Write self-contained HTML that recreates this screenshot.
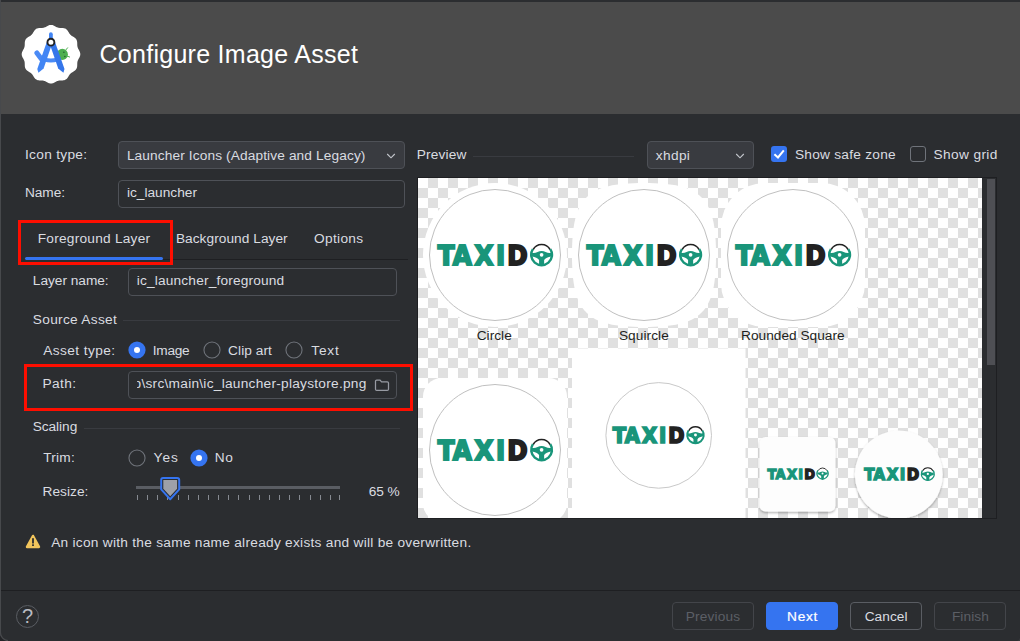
<!DOCTYPE html>
<html lang="en"><head><meta charset="utf-8"><title>Configure Image Asset</title>
<style>
*{box-sizing:border-box;margin:0;padding:0}
html,body{width:1020px;height:641px;overflow:hidden;background:#2b2d30}
body{position:relative;font-family:"Liberation Sans", sans-serif;font-size:13px;color:#dadce0}
.t{position:absolute;white-space:nowrap;line-height:1;display:block}
.abs{position:absolute}
.field{position:absolute;border:1px solid #4e5157;border-radius:4px;background:#2b2d30}
.combo{background:#393b40}
.hline{position:absolute;height:1px;background:#393b40}
.dline{position:absolute;height:1px;background:#1e1f22}
.red{position:absolute;border:3px solid #fe0e00}
.tick{position:absolute;top:495px;width:1px;height:5px;background:#868a91}
.btn{position:absolute;top:602px;height:28px;border-radius:4px;border:1px solid #4e5157}
</style></head><body>
<div class="abs" style="left:0;top:2px;width:1020px;height:112px;background:#4b4b4b"></div>
<div class="abs" style="left:0;top:0;width:1px;height:641px;background:#47494c"></div>
<svg class="abs" style="left:0;top:0" width="100" height="114" viewBox="0 0 100 114">
<path d="M80.30,54.20 L80.28,54.71 L80.20,55.22 L80.09,55.72 L79.93,56.22 L79.74,56.71 L79.52,57.20 L79.28,57.67 L79.03,58.14 L78.78,58.60 L78.53,59.05 L78.29,59.50 L78.07,59.95 L77.87,60.40 L77.70,60.86 L77.56,61.32 L77.45,61.79 L77.37,62.26 L77.32,62.75 L77.28,63.25 L77.26,63.76 L77.25,64.28 L77.24,64.80 L77.23,65.33 L77.20,65.86 L77.15,66.39 L77.07,66.91 L76.95,67.42 L76.80,67.92 L76.61,68.40 L76.37,68.85 L76.10,69.28 L75.78,69.69 L75.43,70.06 L75.04,70.42 L74.63,70.75 L74.20,71.06 L73.76,71.35 L73.31,71.63 L72.85,71.90 L72.41,72.17 L71.98,72.44 L71.56,72.72 L71.17,73.01 L70.80,73.32 L70.45,73.65 L70.12,74.00 L69.81,74.37 L69.52,74.76 L69.24,75.18 L68.97,75.61 L68.70,76.05 L68.43,76.51 L68.15,76.96 L67.86,77.40 L67.55,77.83 L67.22,78.24 L66.86,78.63 L66.49,78.98 L66.08,79.30 L65.65,79.57 L65.20,79.81 L64.72,80.00 L64.22,80.15 L63.71,80.27 L63.19,80.35 L62.66,80.40 L62.13,80.43 L61.60,80.44 L61.08,80.45 L60.56,80.46 L60.05,80.48 L59.55,80.52 L59.06,80.57 L58.59,80.65 L58.12,80.76 L57.66,80.90 L57.20,81.07 L56.75,81.27 L56.30,81.49 L55.85,81.73 L55.40,81.98 L54.94,82.23 L54.47,82.48 L54.00,82.72 L53.51,82.94 L53.02,83.13 L52.52,83.29 L52.02,83.40 L51.51,83.48 L51.00,83.50 L50.49,83.48 L49.98,83.40 L49.48,83.29 L48.98,83.13 L48.49,82.94 L48.00,82.72 L47.53,82.48 L47.06,82.23 L46.60,81.98 L46.15,81.73 L45.70,81.49 L45.25,81.27 L44.80,81.07 L44.34,80.90 L43.88,80.76 L43.41,80.65 L42.94,80.57 L42.45,80.52 L41.95,80.48 L41.44,80.46 L40.92,80.45 L40.40,80.44 L39.87,80.43 L39.34,80.40 L38.81,80.35 L38.29,80.27 L37.78,80.15 L37.28,80.00 L36.80,79.81 L36.35,79.57 L35.92,79.30 L35.51,78.98 L35.14,78.63 L34.78,78.24 L34.45,77.83 L34.14,77.40 L33.85,76.96 L33.57,76.51 L33.30,76.05 L33.03,75.61 L32.76,75.18 L32.48,74.76 L32.19,74.37 L31.88,74.00 L31.55,73.65 L31.20,73.32 L30.83,73.01 L30.44,72.72 L30.02,72.44 L29.59,72.17 L29.15,71.90 L28.69,71.63 L28.24,71.35 L27.80,71.06 L27.37,70.75 L26.96,70.42 L26.57,70.06 L26.22,69.69 L25.90,69.28 L25.63,68.85 L25.39,68.40 L25.20,67.92 L25.05,67.42 L24.93,66.91 L24.85,66.39 L24.80,65.86 L24.77,65.33 L24.76,64.80 L24.75,64.28 L24.74,63.76 L24.72,63.25 L24.68,62.75 L24.63,62.26 L24.55,61.79 L24.44,61.32 L24.30,60.86 L24.13,60.40 L23.93,59.95 L23.71,59.50 L23.47,59.05 L23.22,58.60 L22.97,58.14 L22.72,57.67 L22.48,57.20 L22.26,56.71 L22.07,56.22 L21.91,55.72 L21.80,55.22 L21.72,54.71 L21.70,54.20 L21.72,53.69 L21.80,53.18 L21.91,52.68 L22.07,52.18 L22.26,51.69 L22.48,51.20 L22.72,50.73 L22.97,50.26 L23.22,49.80 L23.47,49.35 L23.71,48.90 L23.93,48.45 L24.13,48.00 L24.30,47.54 L24.44,47.08 L24.55,46.61 L24.63,46.14 L24.68,45.65 L24.72,45.15 L24.74,44.64 L24.75,44.12 L24.76,43.60 L24.77,43.07 L24.80,42.54 L24.85,42.01 L24.93,41.49 L25.05,40.98 L25.20,40.48 L25.39,40.00 L25.63,39.55 L25.90,39.12 L26.22,38.71 L26.57,38.34 L26.96,37.98 L27.37,37.65 L27.80,37.34 L28.24,37.05 L28.69,36.77 L29.15,36.50 L29.59,36.23 L30.02,35.96 L30.44,35.68 L30.83,35.39 L31.20,35.08 L31.55,34.75 L31.88,34.40 L32.19,34.03 L32.48,33.64 L32.76,33.22 L33.03,32.79 L33.30,32.35 L33.57,31.89 L33.85,31.44 L34.14,31.00 L34.45,30.57 L34.78,30.16 L35.14,29.77 L35.51,29.42 L35.92,29.10 L36.35,28.83 L36.80,28.59 L37.28,28.40 L37.78,28.25 L38.29,28.13 L38.81,28.05 L39.34,28.00 L39.87,27.97 L40.40,27.96 L40.92,27.95 L41.44,27.94 L41.95,27.92 L42.45,27.88 L42.94,27.83 L43.41,27.75 L43.88,27.64 L44.34,27.50 L44.80,27.33 L45.25,27.13 L45.70,26.91 L46.15,26.67 L46.60,26.42 L47.06,26.17 L47.53,25.92 L48.00,25.68 L48.49,25.46 L48.98,25.27 L49.48,25.11 L49.98,25.00 L50.49,24.92 L51.00,24.90 L51.51,24.92 L52.02,25.00 L52.52,25.11 L53.02,25.27 L53.51,25.46 L54.00,25.68 L54.47,25.92 L54.94,26.17 L55.40,26.42 L55.85,26.67 L56.30,26.91 L56.75,27.13 L57.20,27.33 L57.66,27.50 L58.12,27.64 L58.59,27.75 L59.06,27.83 L59.55,27.88 L60.05,27.92 L60.56,27.94 L61.08,27.95 L61.60,27.96 L62.13,27.97 L62.66,28.00 L63.19,28.05 L63.71,28.13 L64.22,28.25 L64.72,28.40 L65.20,28.59 L65.65,28.83 L66.08,29.10 L66.49,29.42 L66.86,29.77 L67.22,30.16 L67.55,30.57 L67.86,31.00 L68.15,31.44 L68.43,31.89 L68.70,32.35 L68.97,32.79 L69.24,33.22 L69.52,33.64 L69.81,34.03 L70.12,34.40 L70.45,34.75 L70.80,35.08 L71.17,35.39 L71.56,35.68 L71.98,35.96 L72.41,36.23 L72.85,36.50 L73.31,36.77 L73.76,37.05 L74.20,37.34 L74.63,37.65 L75.04,37.98 L75.43,38.34 L75.78,38.71 L76.10,39.12 L76.37,39.55 L76.61,40.00 L76.80,40.48 L76.95,40.98 L77.07,41.49 L77.15,42.01 L77.20,42.54 L77.23,43.07 L77.24,43.60 L77.25,44.12 L77.26,44.64 L77.28,45.15 L77.32,45.65 L77.37,46.14 L77.45,46.61 L77.56,47.08 L77.70,47.54 L77.87,48.00 L78.07,48.45 L78.29,48.90 L78.53,49.35 L78.78,49.80 L79.03,50.26 L79.28,50.73 L79.52,51.20 L79.74,51.69 L79.93,52.18 L80.09,52.68 L80.20,53.18 L80.28,53.69Z" fill="#fff"/>
<rect x="49" y="32.3" width="3.8" height="9" rx="1.9" fill="#4285f4"/>
<path d="M36.9,53 L41.6,59.2" stroke="#4a8af5" stroke-width="5" stroke-linecap="round" fill="none"/>
<circle cx="62.3" cy="54.4" r="5.6" fill="#4caf50"/>
<path d="M65.6,50.2 L67.6,47.8 M67.4,56.2 L69.6,57" stroke="#4caf50" stroke-width="1" stroke-linecap="round"/>
<circle cx="63.9" cy="52.3" r="0.75" fill="#1e5c2a"/><circle cx="64.9" cy="56.6" r="0.75" fill="#1e5c2a"/>
<path d="M44.3,59.4 Q50.9,61.6 57.5,59.4" stroke="#4a8af5" stroke-width="3.9" fill="none"/>
<path d="M46.6,42.5 L50.9,42.5 L50.9,47.2 L43.6,68.6 L38.4,72.7 L37.3,69 Z" fill="#4285f4"/>
<path d="M55.2,42.5 L50.9,42.5 L50.9,47.2 L58.2,68.6 L63.4,72.7 L64.5,69 Z" fill="#3576ea"/>
<circle cx="50.9" cy="42.2" r="3.45" fill="#fff" stroke="#202124" stroke-width="1.9"/>
</svg>

<div class="field combo" style="left:118px;top:141px;width:287px;height:28px"></div>
<svg class="abs" style="left:386px;top:152px" width="10" height="8" viewBox="0 0 10 8"><path d="M1.2,2 L5,5.8 L8.8,2" fill="none" stroke="#c3c6cc" stroke-width="1.15"/></svg>
<div class="field" style="left:118px;top:180px;width:287px;height:28px"></div>

<div class="dline" style="left:25px;top:259px;width:383px"></div>
<div class="abs" style="left:25px;top:257px;width:138px;height:3px;border-radius:1.5px;background:#3574f0"></div>
<div class="red" style="left:18px;top:220px;width:155px;height:45px"></div>

<div class="field" style="left:128px;top:268px;width:269px;height:28px"></div>
<div class="hline" style="left:123px;top:320px;width:277px"></div>

<svg class="abs" style="left:127px;top:340px" width="20" height="20" viewBox="0 0 20 20"><circle cx="10" cy="10" r="8.6" fill="#3574f0"/><circle cx="10" cy="10" r="3" fill="#fff"/></svg>
<svg class="abs" style="left:202px;top:340px" width="20" height="20" viewBox="0 0 20 20"><circle cx="10" cy="10" r="8.05" fill="none" stroke="#6f737a" stroke-width="1.1"/></svg>
<svg class="abs" style="left:284px;top:340px" width="20" height="20" viewBox="0 0 20 20"><circle cx="10" cy="10" r="8.05" fill="none" stroke="#6f737a" stroke-width="1.1"/></svg>
<svg class="abs" style="left:127px;top:448px" width="20" height="20" viewBox="0 0 20 20"><circle cx="10" cy="10" r="8.05" fill="none" stroke="#6f737a" stroke-width="1.1"/></svg>
<svg class="abs" style="left:189px;top:448px" width="20" height="20" viewBox="0 0 20 20"><circle cx="10" cy="10" r="8.6" fill="#3574f0"/><circle cx="10" cy="10" r="3" fill="#fff"/></svg>
<div class="red" style="left:24px;top:364px;width:389px;height:47px"></div>
<div class="field" style="left:128px;top:371px;width:269px;height:28px"></div>
<div class="abs" id="pathclip" style="left:137px;top:376.65px;width:229.6px;height:17px;font-size:13.7px;overflow:hidden;display:flex;justify-content:flex-end;white-space:nowrap;line-height:1;letter-spacing:0.259px"><span id="pathv">app\src\main\ic_launcher-playstore.png</span></div>
<svg class="abs" style="left:374px;top:378px" width="16" height="14" viewBox="0 0 16 14"><path d="M1.5,3.2 Q1.5,2 2.7,2 L6,2 L7.6,3.8 L13.3,3.8 Q14.5,3.8 14.5,5 L14.5,11.2 Q14.5,12.4 13.3,12.4 L2.7,12.4 Q1.5,12.4 1.5,11.2 Z" fill="none" stroke="#989ba3" stroke-width="1.25"/></svg>

<div class="hline" style="left:84px;top:428px;width:316px"></div>

<div class="abs" style="left:136px;top:486px;width:204px;height:3px;background:#5a5d63"></div>
<div class="tick" style="left:137px"></div>
<div class="tick" style="left:147px"></div>
<div class="tick" style="left:157px"></div>
<div class="tick" style="left:167px"></div>
<div class="tick" style="left:178px"></div>
<div class="tick" style="left:188px"></div>
<div class="tick" style="left:198px"></div>
<div class="tick" style="left:208px"></div>
<div class="tick" style="left:218px"></div>
<div class="tick" style="left:228px"></div>
<div class="tick" style="left:238px"></div>
<div class="tick" style="left:249px"></div>
<div class="tick" style="left:259px"></div>
<div class="tick" style="left:269px"></div>
<div class="tick" style="left:279px"></div>
<div class="tick" style="left:289px"></div>
<div class="tick" style="left:299px"></div>
<div class="tick" style="left:310px"></div>
<div class="tick" style="left:320px"></div>
<div class="tick" style="left:330px"></div>
<div class="tick" style="left:339px"></div>
<svg class="abs" style="left:158px;top:474px" width="24" height="28" viewBox="0 0 24 28"><path d="M5,4 L19.2,4 Q21.2,4 21.2,6 L21.2,15.4 L12.2,25.2 L3.2,15.4 L3.2,6 Q3.2,4 5,4 Z" fill="#2b2d30" stroke="#3574f0" stroke-width="2" stroke-linejoin="round"/><path d="M5.3,6.1 L19.1,6.1 L19.1,14.7 L12.2,22.2 L5.3,14.7 Z" fill="#9da0a8"/></svg>

<svg class="abs" style="left:24px;top:533px" width="18" height="17" viewBox="0 0 18 17"><path d="M9,3 L14.9,13.9 L3.1,13.9 Z" fill="#f2c55c" stroke="#f2c55c" stroke-width="2.6" stroke-linejoin="round"/><rect x="8.1" y="5.2" width="1.8" height="5.3" fill="#2b2d30"/><rect x="8.1" y="11.3" width="1.8" height="1.7" fill="#2b2d30"/></svg>

<div class="hline" style="left:473px;top:156px;width:161px"></div>
<div class="field combo" style="left:647px;top:141px;width:107px;height:28px"></div>
<svg class="abs" style="left:735px;top:152px" width="10" height="8" viewBox="0 0 10 8"><path d="M1.2,2 L5,5.8 L8.8,2" fill="none" stroke="#c3c6cc" stroke-width="1.15"/></svg>
<div class="abs" style="left:771px;top:146px;width:16px;height:16px;border-radius:3px;background:#3574f0"></div>
<svg class="abs" style="left:771px;top:146px" width="16" height="16" viewBox="0 0 16 16"><path d="M3.4,8.2 L7,11.5 L12.8,4.4" fill="none" stroke="#fff" stroke-width="2"/></svg>
<div class="abs" style="left:910px;top:146px;width:16px;height:16px;border-radius:3px;border:1px solid #6f737a"></div>

<div class="abs" style="left:417px;top:177px;width:580px;height:342px;background:#1e1f22"></div>
<div class="abs" style="left:982px;top:178px;width:14px;height:340px;background:#2b2d30"></div>
<div class="abs" style="left:987px;top:179px;width:8px;height:186px;background:#4e4f54"></div>
<svg id="pv" width="564" height="340" viewBox="0 0 564 340" style="position:absolute;left:418px;top:178px">
<defs>
<pattern id="chk" width="20" height="20" patternUnits="userSpaceOnUse"><rect width="20" height="20" fill="#fff"/><rect x="10" width="10" height="10" fill="#e0e0e0"/><rect y="10" width="10" height="10" fill="#e0e0e0"/></pattern>
<filter id="sh" x="-20%" y="-20%" width="140%" height="140%"><feDropShadow dx="0" dy="1.4" stdDeviation="1.3" flood-color="#000" flood-opacity="0.32"/></filter>
</defs>
<rect width="564" height="340" fill="url(#chk)"/>
<circle cx="77" cy="77" r="72" fill="#fff"/>
<circle cx="77" cy="77" r="65.5" fill="none" stroke="#c0c0c0" stroke-width="1"/>
<g transform="translate(19.00,87.60) scale(1)">
<text transform="scale(0.92,1)" x="0.88 17.21 40.74 64.08 76.47" y="-1.00" font-family='"DejaVu Sans", "Liberation Sans", sans-serif' font-weight="700" font-size="26.7" stroke-width="2.00" stroke-linejoin="miter" stroke-miterlimit="2.5" fill="#19957a" stroke="#19957a">TAXI<tspan fill="#222" stroke="#222">D</tspan></text>
<g transform="translate(93.10,-22.30) scale(0.2300)">
<path d="M13,27.5 A41.9,41.9 0 0 1 87,27.5" fill="none" stroke="#222" stroke-width="7.4" stroke-linecap="butt"/>
<path d="M12.1,25.4 A45.2,45.2 0 1 0 87.9,25.4" fill="none" stroke="#19957a" stroke-width="10.5"/>
<path d="M8,41 C25,45 35,33 50,33 C65,33 75,45 92,41 L92,57 C78,59 66,64 61,73 L61,96 L39,96 L39,73 C34,64 22,59 8,57 Z" fill="#19957a"/>
<circle cx="50" cy="50" r="8" fill="#fff"/>
</g>
</g>
<path transform="translate(154,5)" d="M72,0 C14.4,0 0,14.4 0,72 C0,129.6 14.4,144 72,144 C129.6,144 144,129.6 144,72 C144,14.4 129.6,0 72,0 Z" fill="#fff"/>
<circle cx="226" cy="77" r="65.5" fill="none" stroke="#c0c0c0" stroke-width="1"/>
<g transform="translate(168.00,87.60) scale(1)">
<text transform="scale(0.92,1)" x="0.88 17.21 40.74 64.08 76.47" y="-1.00" font-family='"DejaVu Sans", "Liberation Sans", sans-serif' font-weight="700" font-size="26.7" stroke-width="2.00" stroke-linejoin="miter" stroke-miterlimit="2.5" fill="#19957a" stroke="#19957a">TAXI<tspan fill="#222" stroke="#222">D</tspan></text>
<g transform="translate(93.10,-22.30) scale(0.2300)">
<path d="M13,27.5 A41.9,41.9 0 0 1 87,27.5" fill="none" stroke="#222" stroke-width="7.4" stroke-linecap="butt"/>
<path d="M12.1,25.4 A45.2,45.2 0 1 0 87.9,25.4" fill="none" stroke="#19957a" stroke-width="10.5"/>
<path d="M8,41 C25,45 35,33 50,33 C65,33 75,45 92,41 L92,57 C78,59 66,64 61,73 L61,96 L39,96 L39,73 C34,64 22,59 8,57 Z" fill="#19957a"/>
<circle cx="50" cy="50" r="8" fill="#fff"/>
</g>
</g>
<rect x="303" y="5" width="144" height="144" rx="44" fill="#fff"/>
<circle cx="375" cy="77" r="65.5" fill="none" stroke="#c0c0c0" stroke-width="1"/>
<g transform="translate(317.00,87.60) scale(1)">
<text transform="scale(0.92,1)" x="0.88 17.21 40.74 64.08 76.47" y="-1.00" font-family='"DejaVu Sans", "Liberation Sans", sans-serif' font-weight="700" font-size="26.7" stroke-width="2.00" stroke-linejoin="miter" stroke-miterlimit="2.5" fill="#19957a" stroke="#19957a">TAXI<tspan fill="#222" stroke="#222">D</tspan></text>
<g transform="translate(93.10,-22.30) scale(0.2300)">
<path d="M13,27.5 A41.9,41.9 0 0 1 87,27.5" fill="none" stroke="#222" stroke-width="7.4" stroke-linecap="butt"/>
<path d="M12.1,25.4 A45.2,45.2 0 1 0 87.9,25.4" fill="none" stroke="#19957a" stroke-width="10.5"/>
<path d="M8,41 C25,45 35,33 50,33 C65,33 75,45 92,41 L92,57 C78,59 66,64 61,73 L61,96 L39,96 L39,73 C34,64 22,59 8,57 Z" fill="#19957a"/>
<circle cx="50" cy="50" r="8" fill="#fff"/>
</g>
</g>
<rect x="5" y="200" width="144" height="144" rx="18.5" fill="#fff"/>
<circle cx="77" cy="272" r="65.5" fill="none" stroke="#c0c0c0" stroke-width="1"/>
<g transform="translate(19.00,282.60) scale(1)">
<text transform="scale(0.92,1)" x="0.88 17.21 40.74 64.08 76.47" y="-1.00" font-family='"DejaVu Sans", "Liberation Sans", sans-serif' font-weight="700" font-size="26.7" stroke-width="2.00" stroke-linejoin="miter" stroke-miterlimit="2.5" fill="#19957a" stroke="#19957a">TAXI<tspan fill="#222" stroke="#222">D</tspan></text>
<g transform="translate(93.10,-22.30) scale(0.2300)">
<path d="M13,27.5 A41.9,41.9 0 0 1 87,27.5" fill="none" stroke="#222" stroke-width="7.4" stroke-linecap="butt"/>
<path d="M12.1,25.4 A45.2,45.2 0 1 0 87.9,25.4" fill="none" stroke="#19957a" stroke-width="10.5"/>
<path d="M8,41 C25,45 35,33 50,33 C65,33 75,45 92,41 L92,57 C78,59 66,64 61,73 L61,96 L39,96 L39,73 C34,64 22,59 8,57 Z" fill="#19957a"/>
<circle cx="50" cy="50" r="8" fill="#fff"/>
</g>
</g>
<rect x="154" y="170.5" width="173.5" height="174" fill="#fff"/>
<circle cx="240.70000000000005" cy="257.4" r="52.8" fill="none" stroke="#c9c9c9" stroke-width="1"/>
<g transform="translate(194.10,265.60) scale(0.797)">
<text transform="scale(0.92,1)" x="0.88 17.21 40.74 64.08 76.47" y="-1.08" font-family='"DejaVu Sans", "Liberation Sans", sans-serif' font-weight="700" font-size="26.7" stroke-width="2.17" stroke-linejoin="miter" stroke-miterlimit="2.5" fill="#19957a" stroke="#19957a">TAXI<tspan fill="#222" stroke="#222">D</tspan></text>
<g transform="translate(93.10,-22.30) scale(0.2300)">
<path d="M13,27.5 A41.9,41.9 0 0 1 87,27.5" fill="none" stroke="#222" stroke-width="7.4" stroke-linecap="butt"/>
<path d="M12.1,25.4 A45.2,45.2 0 1 0 87.9,25.4" fill="none" stroke="#19957a" stroke-width="10.5"/>
<path d="M8,41 C25,45 35,33 50,33 C65,33 75,45 92,41 L92,57 C78,59 66,64 61,73 L61,96 L39,96 L39,73 C34,64 22,59 8,57 Z" fill="#19957a"/>
<circle cx="50" cy="50" r="8" fill="#fff"/>
</g>
</g>
<rect x="341.5" y="259" width="76" height="74.5" rx="6" fill="#fdfdfd" filter="url(#sh)"/>
<g transform="translate(349.00,301.20) scale(0.531)">
<text transform="scale(0.92,1)" x="0.88 17.21 40.74 64.08 76.47" y="-1.25" font-family='"DejaVu Sans", "Liberation Sans", sans-serif' font-weight="700" font-size="26.7" stroke-width="2.50" stroke-linejoin="miter" stroke-miterlimit="2.5" fill="#19957a" stroke="#19957a">TAXI<tspan fill="#222" stroke="#222">D</tspan></text>
<g transform="translate(93.10,-22.30) scale(0.2300)">
<path d="M13,27.5 A41.9,41.9 0 0 1 87,27.5" fill="none" stroke="#222" stroke-width="7.4" stroke-linecap="butt"/>
<path d="M12.1,25.4 A45.2,45.2 0 1 0 87.9,25.4" fill="none" stroke="#19957a" stroke-width="10.5"/>
<path d="M8,41 C25,45 35,33 50,33 C65,33 75,45 92,41 L92,57 C78,59 66,64 61,73 L61,96 L39,96 L39,73 C34,64 22,59 8,57 Z" fill="#19957a"/>
<circle cx="50" cy="50" r="8" fill="#fff"/>
</g>
</g>
<circle cx="480.79999999999995" cy="296.6" r="44" fill="#fdfdfd" filter="url(#sh)"/>
<g transform="translate(445.70,302.60) scale(0.613)">
<text transform="scale(0.92,1)" x="0.88 17.21 40.74 64.08 76.47" y="-1.19" font-family='"DejaVu Sans", "Liberation Sans", sans-serif' font-weight="700" font-size="26.7" stroke-width="2.37" stroke-linejoin="miter" stroke-miterlimit="2.5" fill="#19957a" stroke="#19957a">TAXI<tspan fill="#222" stroke="#222">D</tspan></text>
<g transform="translate(93.10,-22.30) scale(0.2300)">
<path d="M13,27.5 A41.9,41.9 0 0 1 87,27.5" fill="none" stroke="#222" stroke-width="7.4" stroke-linecap="butt"/>
<path d="M12.1,25.4 A45.2,45.2 0 1 0 87.9,25.4" fill="none" stroke="#19957a" stroke-width="10.5"/>
<path d="M8,41 C25,45 35,33 50,33 C65,33 75,45 92,41 L92,57 C78,59 66,64 61,73 L61,96 L39,96 L39,73 C34,64 22,59 8,57 Z" fill="#19957a"/>
<circle cx="50" cy="50" r="8" fill="#fff"/>
</g>
</g>
</svg>

<div class="dline" style="left:1px;top:590px;width:1019px"></div>
<svg class="abs" style="left:0;top:629px" width="12" height="12" viewBox="0 0 12 12"><path d="M0,0 L0,12 L9,12 A8,8 0 0 1 0,4 Z" fill="#232427"/><path d="M0.5,3 A8,8 0 0 0 8,11.6" fill="none" stroke="#47494c" stroke-width="1.2"/></svg>
<svg class="abs" style="left:1008px;top:629px" width="12" height="12" viewBox="0 0 12 12"><path d="M12,8.5 A4,4 0 0 1 8.5,12 L12,12 Z" fill="#3a3b3e"/></svg>
<div class="abs" style="left:16px;top:605px;width:23px;height:23px;border-radius:50%;border:1px solid #5a5d63"></div>
<span class="t" style="left:21.9px;top:606.3px;font-size:20px;color:#b9bcc3">?</span>
<div class="btn" style="left:672px;width:82px;border-color:#43454a"></div>
<div class="btn" style="left:766px;width:72px;background:#3574f0;border-color:#3574f0"></div>
<div class="btn" style="left:850px;width:72px;border-color:#5a5d63"></div>
<div class="btn" style="left:934px;width:72px;border-color:#43454a"></div>

<span class="t" id="title" style="left:99.5px;top:41.50px;font-size:25px;color:#ffffff;font-weight:400;letter-spacing:0.277px">Configure Image Asset</span>
<span class="t" id="icontype" style="left:25.0px;top:147.65px;font-size:13.7px;color:#dadce0;font-weight:400;letter-spacing:0.296px">Icon type:</span>
<span class="t" id="combo" style="left:126.9px;top:148.65px;font-size:13.7px;color:#dadce0;font-weight:400;letter-spacing:0.119px">Launcher Icons (Adaptive and Legacy)</span>
<span class="t" id="name" style="left:25.0px;top:185.65px;font-size:13.7px;color:#dadce0;font-weight:400;letter-spacing:-0.080px">Name:</span>
<span class="t" id="namev" style="left:126.9px;top:185.65px;font-size:13.7px;color:#dadce0;font-weight:400;letter-spacing:0.005px">ic_launcher</span>
<span class="t" id="tab1" style="left:37.7px;top:231.65px;font-size:13.7px;color:#dadce0;font-weight:400;letter-spacing:0.242px">Foreground Layer</span>
<span class="t" id="tab2" style="left:175.9px;top:231.65px;font-size:13.7px;color:#dadce0;font-weight:400;letter-spacing:0.044px">Background Layer</span>
<span class="t" id="tab3" style="left:314.0px;top:231.65px;font-size:13.7px;color:#dadce0;font-weight:400;letter-spacing:0.323px">Options</span>
<span class="t" id="layername" style="left:32.8px;top:273.65px;font-size:13.7px;color:#dadce0;font-weight:400;letter-spacing:-0.021px">Layer name:</span>
<span class="t" id="layerv" style="left:136.8px;top:273.65px;font-size:13.7px;color:#dadce0;font-weight:400;letter-spacing:0.169px">ic_launcher_foreground</span>
<span class="t" id="srcasset" style="left:32.8px;top:312.65px;font-size:13.7px;color:#dadce0;font-weight:400;letter-spacing:0.306px">Source Asset</span>
<span class="t" id="assettype" style="left:43.3px;top:343.65px;font-size:13.7px;color:#dadce0;font-weight:400;letter-spacing:0.405px">Asset type:</span>
<span class="t" id="image" style="left:152.8px;top:343.65px;font-size:13.7px;color:#dadce0;font-weight:400;letter-spacing:-0.306px">Image</span>
<span class="t" id="clipart" style="left:228.1px;top:343.65px;font-size:13.7px;color:#dadce0;font-weight:400;letter-spacing:0.055px">Clip art</span>
<span class="t" id="text" style="left:311.3px;top:343.65px;font-size:13.7px;color:#dadce0;font-weight:400;letter-spacing:0.760px">Text</span>
<span class="t" id="path" style="left:42.6px;top:376.65px;font-size:13.7px;color:#dadce0;font-weight:400;letter-spacing:0.356px">Path:</span>
<span class="t" id="scaling" style="left:32.7px;top:419.65px;font-size:13.7px;color:#dadce0;font-weight:400;letter-spacing:-0.052px">Scaling</span>
<span class="t" id="trim" style="left:43.2px;top:450.65px;font-size:13.7px;color:#dadce0;font-weight:400;letter-spacing:0.225px">Trim:</span>
<span class="t" id="yes" style="left:153.6px;top:450.65px;font-size:13.7px;color:#dadce0;font-weight:400;letter-spacing:0.977px">Yes</span>
<span class="t" id="no" style="left:214.7px;top:450.65px;font-size:13.7px;color:#dadce0;font-weight:400;letter-spacing:0.713px">No</span>
<span class="t" id="resize" style="left:42.5px;top:484.65px;font-size:13.7px;color:#dadce0;font-weight:400;letter-spacing:0.035px">Resize:</span>
<span class="t" id="pct" style="left:368.8px;top:484.65px;font-size:13.7px;color:#dadce0;font-weight:400;letter-spacing:-0.095px">65 %</span>
<span class="t" id="warn" style="left:51.2px;top:535.65px;font-size:13.7px;color:#dadce0;font-weight:400;letter-spacing:0.270px">An icon with the same name already exists and will be overwritten.</span>
<span class="t" id="preview" style="left:416.7px;top:147.65px;font-size:13.7px;color:#dadce0;font-weight:400;letter-spacing:0.182px">Preview</span>
<span class="t" id="xhdpi" style="left:655.8px;top:148.65px;font-size:13.7px;color:#dadce0;font-weight:400;letter-spacing:0.341px">xhdpi</span>
<span class="t" id="safezone" style="left:794.9px;top:147.65px;font-size:13.7px;color:#dadce0;font-weight:400;letter-spacing:0.264px">Show safe zone</span>
<span class="t" id="grid" style="left:933.6px;top:147.65px;font-size:13.7px;color:#dadce0;font-weight:400;letter-spacing:0.364px">Show grid</span>
<span class="t" id="lcircle" style="left:476.7px;top:328.65px;font-size:13.7px;color:#1e1f22;font-weight:400;letter-spacing:0.016px">Circle</span>
<span class="t" id="lsquircle" style="left:618.9px;top:328.65px;font-size:13.7px;color:#1e1f22;font-weight:400;letter-spacing:0.069px">Squircle</span>
<span class="t" id="lrounded" style="left:741.0px;top:328.65px;font-size:13.7px;color:#1e1f22;font-weight:400;letter-spacing:0.013px">Rounded Square</span>
<span class="t" id="prev" style="left:685.8px;top:609.65px;font-size:13.7px;color:#5c5f66;font-weight:400;letter-spacing:0.134px">Previous</span>
<span class="t" id="next" style="left:787.1px;top:609.65px;font-size:13.7px;color:#ffffff;font-weight:400;letter-spacing:0.661px;-webkit-text-stroke:0.22px #fff">Next</span>
<span class="t" id="cancel" style="left:864.7px;top:609.65px;font-size:13.7px;color:#dadce0;font-weight:400;letter-spacing:0.029px">Cancel</span>
<span class="t" id="finish" style="left:951.9px;top:609.65px;font-size:13.7px;color:#5c5f66;font-weight:400;letter-spacing:0.101px">Finish</span>
</body></html>
